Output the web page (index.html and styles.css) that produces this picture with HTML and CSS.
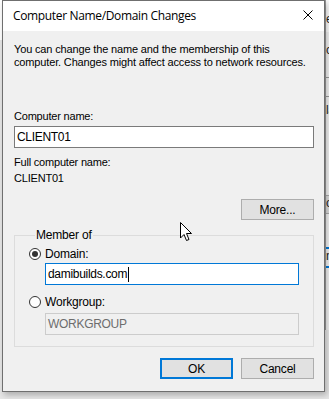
FILE: index.html
```html
<!DOCTYPE html>
<html lang="en">
<head>
  <meta charset="UTF-8">
  <meta name="viewport" content="width=device-width, initial-scale=1.0">
  <title>Computer Name/Domain Changes</title>
  <link rel="stylesheet" href="styles.css">
</head>
<body>
  <div class="desktop">
    <div class="dialog">
      <div class="titlebar">
        <span class="title">Computer Name/Domain Changes</span>
        <svg class="close" width="10" height="10" viewBox="0 0 10 10">
          <path d="M0.5 0.5 L9.5 9.5 M9.5 0.5 L0.5 9.5" stroke="#000" stroke-width="1" fill="none"/>
        </svg>
      </div>
      <div class="content">
        <p class="intro">You can change the name and the membership of this<br>computer. Changes might affect access to network resources.</p>

        <label class="label first">Computer name:</label>
        <div class="textbox">CLIENT01</div>

        <div class="label full">Full computer name:</div>
        <div class="label">CLIENT01</div>

        <div class="row right more-row">
          <button class="btn">More...</button>
        </div>

        <fieldset class="group">
          <legend>Member of</legend>
          <div class="radio-row">
            <span class="radio checked"></span>
            <span>Domain:</span>
          </div>
          <div class="textbox focused">damibuilds.com<span class="caret"></span></div>
          <div class="radio-row second">
            <span class="radio"></span>
            <span>Workgroup:</span>
          </div>
          <div class="textbox disabled">WORKGROUP</div>
        </fieldset>

        <div class="row right buttons">
          <button class="btn default">OK</button>
          <button class="btn">Cancel</button>
        </div>
      </div>
    </div>

    <!-- window sitting behind the dialog -->
    <div class="back-window">
      <div class="back-title">er</div>
      <div class="back-text c">c</div>
      <div class="back-line"></div>
      <div class="back-text la">la</div>
      <div class="back-btn">or</div>
      <div class="back-input">n</div>
    </div>
  </div>

  <svg class="cursor" width="13" height="20" viewBox="0 0 13 20">
    <path d="M0.5 0.5 L0.5 16 L4 12.5 L6.5 18.5 L9 17.5 L6.5 11.5 L11.5 11.5 Z" fill="#fff" stroke="#000" stroke-width="1" stroke-linejoin="miter"/>
  </svg>
</body>
</html>
```

FILE: styles.css
```css
body {
  margin: 0;
  padding: 0;
  background: #e9e9e9;
  font-family: "Liberation Sans", Arial, sans-serif;
  font-size: 11px;
  letter-spacing: -0.2px;
  color: #000;
}

.desktop {
  display: flex;
  height: 399px;
  padding-left: 2px;
  background: linear-gradient(#ffffff 0, #ffffff 40px, #e6e6e6 40px);
}

.dialog {
  width: 321px;
  height: 390px;
  border: 1px solid #6f6f6f;
  background: #f0f0f0;
  box-shadow: 2px 3px 6px rgba(0, 0, 0, 0.25);
  flex-shrink: 0;
  position: relative;
  z-index: 1;
}

.titlebar {
  height: 30px;
  background: #ffffff;
  display: flex;
  align-items: center;
  justify-content: space-between;
  padding: 0 10px 0 10px;
}

.title {
  font-family: "Open Sans", "Noto Sans", sans-serif;
  font-size: 12px;
  letter-spacing: -0.35px;
  margin-top: -1px;
}

.close {
  margin-right: 1px;
  margin-top: -2px;
}

.content {
  padding: 0 10px 0 11px;
}

.intro {
  margin: 12px 0 0;
  line-height: 13px;
  letter-spacing: -0.15px;
  white-space: nowrap;
}

.label {
  display: block;
  line-height: 13px;
}

.label.first {
  margin-top: 41px;
}

.label.full {
  margin-top: 8px;
  margin-bottom: 3px;
}

.textbox {
  box-sizing: border-box;
  height: 22px;
  margin-top: 3px;
  border: 1px solid #7a7a7a;
  background: #ffffff;
  padding: 0 4px 0 2px;
  display: flex;
  align-items: center;
  font-size: 12px;
  letter-spacing: -0.3px;
}

.textbox.focused {
  border-color: #0078d7;
  margin-top: 2px;
}

.textbox.disabled {
  border-color: #cccccc;
  background: #f0f0f0;
  color: #6d6d6d;
  margin-top: 4px;
}

.caret {
  width: 1px;
  height: 15px;
  background: #000;
  margin-left: 1px;
}

.row {
  display: flex;
  gap: 8px;
}

.right {
  justify-content: flex-end;
}

.more-row {
  margin-top: 14px;
}

.btn {
  width: 73px;
  height: 21px;
  box-sizing: border-box;
  border: 1px solid #adadad;
  background: #e1e1e1;
  font-family: "Liberation Sans", Arial, sans-serif;
  font-size: 12px;
  letter-spacing: -0.2px;
  color: #000;
  padding: 0;
}

.btn.default {
  border: 2px solid #0078d7;
}

.group {
  margin: 9px 0 0;
  padding: 5px 14px 11px 14px;
  border: 1px solid #dcdcdc;
  min-width: 0;
}

.group legend {
  padding: 0 1px;
  margin-left: 6px;
  font-size: 12px;
  line-height: 13px;
}

.radio-row {
  display: flex;
  align-items: center;
  gap: 4px;
  height: 14px;
  font-size: 12px;
}

.radio-row.second {
  margin-top: 10px;
}

.radio {
  box-sizing: border-box;
  width: 12px;
  height: 12px;
  border-radius: 50%;
  border: 1px solid #333333;
  background: #ffffff;
  display: flex;
  align-items: center;
  justify-content: center;
}

.radio.checked::after {
  content: "";
  width: 6px;
  height: 6px;
  border-radius: 50%;
  background: #333333;
}

.group .textbox {
  margin-left: 16px;
}

.buttons {
  margin-top: 11px;
}

.back-window {
  flex: 1;
  height: 330px;
  background: #f0f0f0;
  border-left: 1px solid #9a9a9a;
  overflow: hidden;
  font-size: 12px;
  color: #222;
  display: flex;
  flex-direction: column;
}

.back-title {
  height: 32px;
  background: #fafafa;
  padding-top: 12px;
  box-sizing: border-box;
}

.back-text.c {
  margin-top: 11px;
}

.back-line {
  margin-top: 20px;
  height: 18px;
  border-top: 1px solid #999;
  border-bottom: 1px solid #999;
}

.back-text.la {
  margin-top: 6px;
}

.back-btn {
  margin-top: 78px;
  height: 17px;
  background: #d9d9d9;
  border-top: 1px solid #aaa;
  border-bottom: 1px solid #aaa;
}

.back-input {
  margin-top: 33px;
  height: 17px;
  border-top: 2px solid #0078d7;
  border-bottom: 2px solid #0078d7;
}

.cursor {
  position: absolute;
  left: 180px;
  top: 222px;
  z-index: 5;
}
```
